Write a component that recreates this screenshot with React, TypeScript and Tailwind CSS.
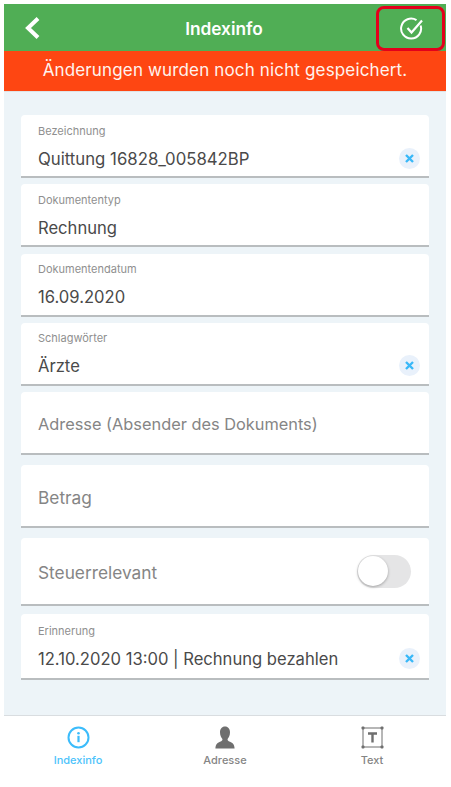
import { ReactNode } from 'react'

function ClearButton() {
  return (
    <div className="w-[21px] h-[21px] rounded-full bg-[#e9f1fb] flex items-center justify-center shrink-0 relative -top-[1px]">
      <svg width="11" height="11" viewBox="0 0 11 11">
        <path d="M2 2L9 9M9 2L2 9" stroke="#3ab8f8" strokeWidth="2.4" strokeLinecap="butt" />
      </svg>
    </div>
  )
}

function FilledField({ label, value, clear, className, labelClass = 'mt-[9px]', valueClass = 'text-[16.6px]' }: { label: string; value: string; clear?: boolean; className: string; labelClass?: string; valueClass?: string }) {
  return (
    <div className={`${className} bg-white rounded-t-[4px] border-b-2 border-[#b9bdbf] pl-[17px] pr-[9px] flex flex-col`}>
      <div className={`${labelClass} text-[11px] leading-[14px] text-[#8f8f8f]`}>{label}</div>
      <div className="flex items-center justify-between mt-[9px]">
        <span className={`${valueClass} leading-[24px] text-[#4a4a4a]`}>{value}</span>
        {clear && <ClearButton />}
      </div>
    </div>
  )
}

function EmptyField({ label, className, labelClass, children }: { label: string; className: string; labelClass: string; children?: ReactNode }) {
  return (
    <div className={`${className} bg-white rounded-t-[4px] border-b-2 border-[#b9bdbf] pl-[17px] pr-[18px] flex items-center justify-between`}>
      <span className={`${labelClass} text-[#858585] relative top-[2px]`}>{label}</span>
      {children}
    </div>
  )
}

function TabItem({ label, active, children }: { label: string; active?: boolean; children: ReactNode }) {
  return (
    <div className="flex flex-col items-center w-[147px]">
      <div className="h-[24px] flex items-center justify-center">{children}</div>
      <span className={`text-[11px] leading-[14px] mt-[4px] font-medium ${active ? 'text-[#4cc3fb]' : 'text-[#858585]'}`}>{label}</span>
    </div>
  )
}

export default function App() {
  return (
    <div className="w-[451px] h-[787px] bg-white pt-[4px] pl-[4px] pr-[5px] flex flex-col font-['Inter',sans-serif]">
      {/* Header */}
      <div className="relative h-[47px] bg-[#50ae55] flex items-center justify-center shrink-0">
        <svg className="absolute left-[20px] top-[12px]" width="17" height="24" viewBox="0 0 17 24" fill="none">
          <path d="M14 2.5L4 12L14 21.5" stroke="white" strokeWidth="4" />
        </svg>
        <span className="text-white text-[17.3px] font-semibold relative top-[1px] -left-[1px]">Indexinfo</span>
        <div className="absolute left-[372px] top-[2px] w-[69px] h-[45px] rounded-[8px] border-[3px] border-[#e3001b] flex items-center justify-center">
          <svg className="relative left-[1px]" width="24" height="24" viewBox="0 0 24 24" fill="none" stroke="white" strokeWidth="2">
            <path d="M20.6 8.5A10 10 0 1 1 16.5 3.2" />
            <path d="M7.5 11L11.5 15.5L22 3.5" strokeWidth="2.2" />
          </svg>
        </div>
      </div>

      {/* Unsaved banner */}
      <div className="h-[41px] bg-[#fe4612] flex items-center justify-center shrink-0 border-b border-[#dfe3e6]">
        <span className="text-[#fff3ee] text-[17px] tracking-[0.15px]">Änderungen wurden noch nicht gespeichert.</span>
      </div>

      {/* Form */}
      <div className="h-[623px] bg-[#edf4f8] px-[17px] pt-[23px] flex flex-col shrink-0">
        <FilledField className="h-[63px] mb-[6px]" valueClass="text-[16.75px]" label="Bezeichnung" value="Quittung 16828_005842BP" clear />
        <FilledField className="h-[63px] mb-[7px]" label="Dokumententyp" value="Rechnung" />
        <FilledField className="h-[63px] mb-[6px]" labelClass="mt-[8px]" label="Dokumentendatum" value="16.09.2020" />
        <FilledField className="h-[63px] mb-[6px]" labelClass="mt-[8px]" label="Schlagwörter" value="Ärzte" clear />
        <EmptyField className="h-[63px] mb-[10px]" labelClass="text-[16.35px]" label="Adresse (Absender des Dokuments)" />
        <EmptyField className="h-[63px] mb-[10px]" labelClass="text-[17.3px]" label="Betrag" />
        <EmptyField className="h-[68px] mb-[8px]" labelClass="text-[17.3px]" label="Steuerrelevant">
          <div className="w-[54px] h-[33px] rounded-full bg-[#e5e5e6] relative">
            <div className="absolute left-[1px] top-[1.5px] w-[30px] h-[30px] rounded-full bg-white shadow-[0_1px_3px_rgba(0,0,0,0.3)]" />
          </div>
        </EmptyField>
        <FilledField className="h-[66px]" labelClass="mt-[10px]" label="Erinnerung" value="12.10.2020 13:00 | Rechnung bezahlen" clear />
      </div>

      {/* Tab bar */}
      <div className="h-[53px] bg-white border-t border-[#d9dde0] pt-[9px] flex shrink-0 justify-center">
        <TabItem label="Indexinfo" active>
          <svg width="23" height="23" viewBox="0 0 23 23" fill="none">
            <circle cx="11.5" cy="11.5" r="10" stroke="#3cbcfb" strokeWidth="2" />
            <circle cx="11.5" cy="7.2" r="1.3" fill="#3cbcfb" />
            <rect x="10.4" y="9.8" width="2.2" height="6.4" fill="#3cbcfb" />
          </svg>
        </TabItem>
        <TabItem label="Adresse">
          <svg width="20" height="23" viewBox="0 0 20 23" fill="#6f6f6f">
            <path d="M10 0.5C13.2 0.5 15 3 15 6.2C15 9.2 13.8 11.6 12.6 13C12.4 14.4 13 15 15 15.8C17.8 16.9 19.3 18.2 19.6 22.5H0.4C0.7 18.2 2.2 16.9 5 15.8C7 15 7.6 14.4 7.4 13C6.2 11.6 5 9.2 5 6.2C5 3 6.8 0.5 10 0.5Z" />
          </svg>
        </TabItem>
        <TabItem label="Text">
          <svg width="23" height="23" viewBox="0 0 23 23" fill="none">
            <rect x="2" y="2" width="19" height="19" stroke="#6f6f6f" strokeWidth="1" />
            <rect x="0.5" y="0.5" width="3" height="3" rx="1" fill="#6f6f6f" />
            <rect x="19.5" y="0.5" width="3" height="3" rx="1" fill="#6f6f6f" />
            <rect x="0.5" y="19.5" width="3" height="3" rx="1" fill="#6f6f6f" />
            <rect x="19.5" y="19.5" width="3" height="3" rx="1" fill="#6f6f6f" />
            <path d="M7 7.5H16M11.5 7.5V16.5" stroke="#6f6f6f" strokeWidth="2.4" />
          </svg>
        </TabItem>
      </div>
    </div>
  )
}
